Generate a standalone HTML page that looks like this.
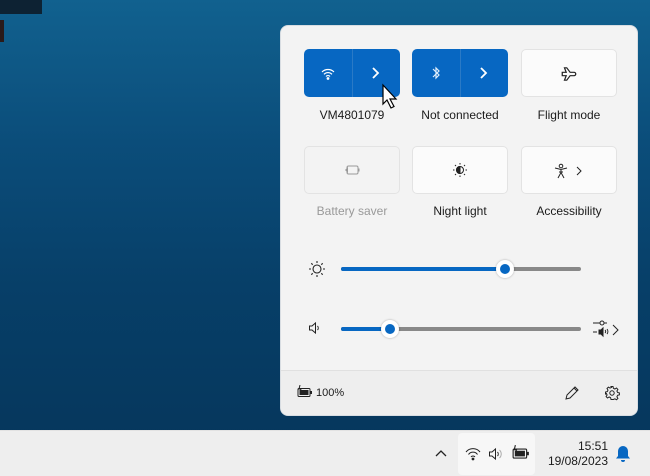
<!DOCTYPE html>
<html><head><style>
*{margin:0;padding:0;box-sizing:border-box}
body{width:650px;height:476px;overflow:hidden;position:relative;font-family:"Liberation Sans",sans-serif;background:linear-gradient(180deg,#11618f 0%,#0b4d7a 30%,#073f68 60%,#05355a 100%)}
.panel{position:absolute;left:280px;top:25px;width:358px;height:391px;background:#f3f3f3;border-radius:8px;overflow:hidden;border:1px solid #d8dde2}
.foot{position:absolute;left:0;right:0;top:344px;bottom:0;background:#eeeeee;border-top:1px solid #e0e0e0}
.t{position:absolute;width:96px;height:48px;border-radius:5px;background:#fbfbfb;border:1px solid #e3e3e3}
.b{background:#0767c2;border:none}
.b .d{position:absolute;left:48px;top:0;width:1px;height:48px;background:#2a7ac6}
.lbl{position:absolute;width:110px;text-align:center;font-size:12px;color:#1b1b1b}
.track{position:absolute;height:4px;border-radius:2px;background:#888}
.fill{position:absolute;height:4px;border-radius:2px;background:#0767c2}
.thumb{position:absolute;width:18px;height:18px;border-radius:50%;background:#fff;box-shadow:0 0 2px rgba(0,0,0,.3)}
.thumb:after{content:"";position:absolute;left:4px;top:4px;width:10px;height:10px;border-radius:50%;background:#0767c2}
.task{position:absolute;left:0;top:430px;width:650px;height:46px;background:#eeeeee;border-top:1px solid #e2e2e2}
svg{position:absolute}
</style></head><body>
<div style="position:absolute;left:0;top:0;width:42px;height:14px;background:#0d2233"></div>
<div style="position:absolute;left:0;top:20px;width:4px;height:22px;background:#2a1a1a"></div>
<div class="panel">
 <div class="t b" style="left:23px;top:23px"><div class="d"></div>
  <svg style="left:16px;top:16px" width="16" height="16" viewBox="0 0 16 16" fill="none" stroke="#fff" stroke-width="1.2"><path d="M2 7a8.5 8.5 0 0 1 12 0M4 9.3a5.5 5.5 0 0 1 8 0M6 11.5a2.6 2.6 0 0 1 4 0"/><circle cx="8" cy="13.5" r=".8" fill="#fff"/></svg>
  <svg style="left:66px;top:17px" width="12" height="14" viewBox="0 0 12 14" fill="none" stroke="#fff" stroke-width="1.8"><path d="M3 2l5 5-5 5"/></svg>
 </div>
 <div class="t b" style="left:131px;top:23px"><div class="d"></div>
  <svg style="left:18px;top:16px" width="12" height="16" viewBox="0 0 12 16" fill="none" stroke="#e0eefb" stroke-width="1.2"><path d="M3 4l6 6-3 3V3l3 3-6 6"/></svg>
  <svg style="left:66px;top:17px" width="12" height="14" viewBox="0 0 12 14" fill="none" stroke="#fff" stroke-width="1.8"><path d="M3 2l5 5-5 5"/></svg>
 </div>
 <div class="t" style="left:240px;top:23px">
  <svg style="left:38px;top:15px" width="18" height="18" viewBox="0 0 16 16" fill="none" stroke="#222" stroke-width="1.1"><path d="M2 6.5h3.5l-1.5-4h2l3 4h3.5a1.5 1.5 0 0 1 0 3H9l-3 4H4l1.5-4H2z"/></svg>
 </div>
 <div class="lbl" style="left:16px;top:82px">VM4801079</div>
 <div class="lbl" style="left:124px;top:82px">Not connected</div>
 <div class="lbl" style="left:233px;top:82px">Flight mode</div>
 <div class="t" style="left:23px;top:120px;background:#f3f3f3">
  <svg style="left:39px;top:17px" width="16" height="12" viewBox="0 0 16 12" fill="#999"><rect x="3" y="2" width="11" height="8" rx="1.5" fill="none" stroke="#999"/><rect x="14" y="4.5" width="1.5" height="3"/><path d="M1 6l3-3v6z"/></svg>
 </div>
 <div class="t" style="left:131px;top:120px">
  <svg style="left:39px;top:15px" width="16" height="16" viewBox="0 0 16 16" fill="none" stroke="#222" stroke-width="1"><circle cx="8" cy="8" r="3.5"/><path d="M8 4.5a3.5 3.5 0 0 0 0 7z" fill="#222"/><path d="M8 1v1.5M8 13.5V15M1 8h1.5M13.5 8H15M3 3l1 1M12 12l1 1M3 13l1-1M12 4l1-1"/></svg>
 </div>
 <div class="t" style="left:240px;top:120px">
  <svg style="left:32px;top:16px" width="14" height="16" viewBox="0 0 14 16" fill="none" stroke="#222" stroke-width="1"><circle cx="7" cy="3" r="1.8"/><path d="M1 5l6 1.5L13 5M7 6.5v3M4 15l3-5.5 3 5.5M5 9h4"/></svg>
  <svg style="left:53px;top:18px" width="8" height="12" viewBox="0 0 8 12" fill="none" stroke="#222" stroke-width="1"><path d="M2 2l4 4-4 4"/></svg>
 </div>
 <div class="lbl" style="left:16px;top:178px;color:#999">Battery saver</div>
 <div class="lbl" style="left:124px;top:178px">Night light</div>
 <div class="lbl" style="left:233px;top:178px">Accessibility</div>
 <svg style="left:27px;top:234px" width="18" height="18" viewBox="0 0 18 18" fill="none" stroke="#222" stroke-width="1.1"><circle cx="9" cy="9" r="4"/><path d="M9 1v2M9 15v2M1 9h2M15 9h2M3.3 3.3l1.4 1.4M13.3 13.3l1.4 1.4M3.3 14.7l1.4-1.4M13.3 4.7l1.4-1.4"/></svg>
 <div class="track" style="left:60px;top:241px;width:240px"></div>
 <div class="fill" style="left:60px;top:241px;width:164px"></div>
 <div class="thumb" style="left:215px;top:234px"></div>
 <svg style="left:27px;top:295px" width="14" height="14" viewBox="0 0 14 14" fill="none" stroke="#222" stroke-width="1"><path d="M1.5 5h2.5l3.5-3v10L4 9H1.5zM9.5 5a3 3 0 0 1 0 4"/></svg>
 <div class="track" style="left:60px;top:301px;width:240px"></div>
 <div class="fill" style="left:60px;top:301px;width:50px"></div>
 <div class="thumb" style="left:100px;top:294px"></div>
 <svg style="left:311px;top:294px" width="28" height="18" viewBox="0 0 28 18" fill="none" stroke="#222" stroke-width="1"><path d="M1 3h7M12 3h3M1 12h4"/><circle cx="10" cy="3" r="2"/><path d="M7 10h2l2-2v8l-2-2H7z" fill="#222"/><path d="M13 10a2 2 0 0 1 0 3M15 9a4 4 0 0 1 0 5M21 5l5 5-5 5" /></svg>
 <div class="foot"></div>
 <svg style="left:16px;top:359px" width="16" height="14" viewBox="0 0 16 14" fill="#222"><rect x="1" y="3.5" width="12" height="8" rx="1" fill="none" stroke="#222"/><rect x="2.5" y="5" width="9" height="5"/><rect x="13" y="6" width="2" height="3"/><path d="M3 0l-1 4h2l-1 3" stroke="#222" fill="none"/></svg>
 <div style="position:absolute;left:35px;top:361px;font-size:11px;color:#1b1b1b">100%</div>
 <svg style="left:283px;top:359px" width="16" height="16" viewBox="0 0 16 16" fill="none" stroke="#222" stroke-width="1"><path d="M2 14l1-4 8-8 3 3-8 8zM10 3l3 3"/></svg>
 <svg style="left:323px;top:359px" width="16" height="16" viewBox="0 0 16 16" fill="none" stroke="#222" stroke-width="1"><circle cx="8" cy="8" r="2.2"/><path d="M7 1.5h2l.4 1.8 1.5.7 1.6-1 1.4 1.4-1 1.6.7 1.5 1.8.4v2l-1.8.4-.7 1.5 1 1.6-1.4 1.4-1.6-1-1.5.7L9 14.5H7l-.4-1.8-1.5-.7-1.6 1-1.4-1.4 1-1.6-.7-1.5L1.5 9V7l1.8-.4.7-1.5-1-1.6 1.4-1.4 1.6 1 1.5-.7z"/></svg>
</div>
<svg style="left:380px;top:82px" width="22" height="30" viewBox="0 0 22 30"><path d="M3 3v19l4-4 4 8 3-1.5-4-7.5h6z" fill="#fff" stroke="#000" stroke-width="1.2"/></svg>
<div class="task">
 <svg style="left:435px;top:18px" width="12" height="8" viewBox="0 0 12 8" fill="none" stroke="#222" stroke-width="1.3"><path d="M1 7l5-5 5 5"/></svg>
 <div style="position:absolute;left:458px;top:2px;width:77px;height:42px;background:#f7f7f7;border-radius:4px"></div>
 <svg style="left:465px;top:16px" width="16" height="14" viewBox="0 0 16 14" fill="none" stroke="#222" stroke-width="1"><path d="M1 5a9 9 0 0 1 14 0M3.5 7.5a5.5 5.5 0 0 1 9 0M6 10a2.5 2.5 0 0 1 4 0"/><circle cx="8" cy="12" r=".9" fill="#222"/></svg>
 <svg style="left:488px;top:16px" width="16" height="14" viewBox="0 0 16 14" fill="none" stroke="#222" stroke-width="1"><path d="M1.5 5h2.5l3.5-3v10L4 9H1.5zM9.5 5a3 3 0 0 1 0 4"/><path d="M11.5 3a5.5 5.5 0 0 1 0 8" stroke="#aaa"/></svg>
 <svg style="left:512px;top:14px" width="18" height="16" viewBox="0 0 16 14" fill="#222"><rect x="1" y="3.5" width="12" height="8" rx="1" fill="none" stroke="#222"/><rect x="2.5" y="5" width="9" height="5"/><rect x="13" y="6" width="2" height="3"/><path d="M3 0l-1 4h2l-1 3" stroke="#222" fill="none"/></svg>
 <div style="position:absolute;left:540px;top:8px;width:68px;text-align:right;font-size:12px;color:#1b1b1b;line-height:15px">15:51<br>19/08/2023</div>
 <svg style="left:615px;top:14px" width="16" height="18" viewBox="0 0 16 18" fill="#0767c2"><path d="M8 1a5 5 0 0 0-5 5v5l-2 2.5h14L13 11V6a5 5 0 0 0-5-5z"/><path d="M6 15a2 2 0 0 0 4 0z"/></svg>
</div>
</body></html>
